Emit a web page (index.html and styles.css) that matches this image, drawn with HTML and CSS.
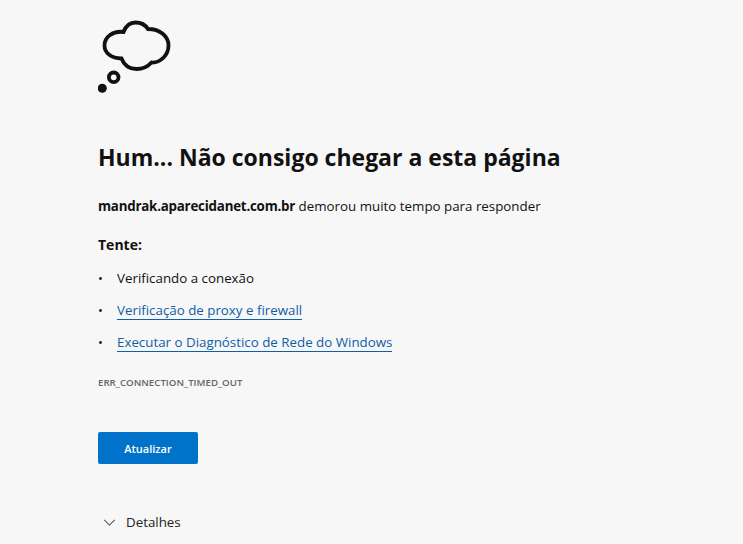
FILE: index.html
```html
<!DOCTYPE html>
<html lang="pt-BR">
<head>
<meta charset="utf-8">
<title>Não consigo chegar a esta página</title>
<link rel="stylesheet" href="styles.css">
</head>
<body>
<main class="page">
  <svg class="cloud" viewBox="98 16 80 80" width="80" height="80" aria-hidden="true">
    <path class="cloud-line" d="M123.500 32C126 25.500 131 22.500 135.500 22.500C141 22.500 145.500 25 148 29C160 29 168.500 36 168.500 45.500C168.500 55 160.500 63 151.500 62.500C147 67.500 141.500 69 136.500 69C129.500 69 124 65 121.500 58.500C111.500 58.500 104.500 53 104.500 45.500C104.500 37 113 30.500 123.500 32Z"/>
    <circle class="cloud-line ring" cx="113.700" cy="77.300" r="4.800"/>
    <circle class="dot" cx="102.300" cy="88.300" r="4.500"/>
  </svg>
  <h1 class="title">Hum... Não consigo chegar a esta página</h1>
  <p class="lead"><strong>mandrak.aparecidanet.com.br</strong> demorou muito tempo para responder</p>
  <h2 class="try">Tente:</h2>
  <ul class="tips">
    <li>Verificando a conexão</li>
    <li><a href="#">Verificação de proxy e firewall</a></li>
    <li><a href="#">Executar o Diagnóstico de Rede do Windows</a></li>
  </ul>
  <p class="code">ERR_CONNECTION_TIMED_OUT</p>
  <button class="reload" type="button">Atualizar</button>
  <div class="details">
    <svg class="chevron" viewBox="0 0 14 8" width="13" height="7" aria-hidden="true"><path d="M1 1l6 6 6-6"/></svg>
    <span>Detalhes</span>
  </div>
</main>
</body>
</html>
```
FILE: styles.css
```css
html, body {
  margin: 0;
  height: 100%;
  overflow: hidden;
  background: #f7f7f7;
}
body {
  color: #111;
  font-family: "Open Sans", "Noto Sans", sans-serif;
  font-size: 13.330px;
}
.page {
  display: flex;
  flex-direction: column;
  align-items: flex-start;
  padding: 16px 0 0 98px;
}
.cloud { display: block; }
.cloud-line { fill: none; stroke: #111; stroke-width: 3.800; }
.ring { stroke-width: 3.800; }
.dot { fill: #111; }
.title {
  margin: 46px 0 0;
  font-size: 23px;
  line-height: 30px;
  font-weight: 700;
}
.lead {
  margin: 24px 0 0;
  line-height: 20px;
}
.lead strong { font-weight: 700; letter-spacing: -0.220px; }
.try {
  margin: 19px 0 0;
  font-size: 14px;
  line-height: 20px;
  font-weight: 700;
}
.tips {
  list-style: none;
  margin: 13px 0 0;
  padding: 0;
  display: flex;
  flex-direction: column;
  gap: 12px;
}
.tips li {
  display: flex;
  line-height: 20px;
}
.tips li::before {
  content: "•";
  width: 19px;
  flex: none;
  font-size: 13px;
}
.tips a {
  color: #0f5ea8;
  text-decoration: none;
  border-bottom: 1px solid #0f5ea8;
  box-sizing: border-box;
  height: 20px;
}
.code {
  margin: 24px 0 0;
  font-size: 9.700px;
  line-height: 14px;
  font-weight: 600;
  color: #666;
}
.reload {
  margin-top: 42px;
  width: 100px;
  height: 32px;
  border: 0;
  border-radius: 2px;
  background: #0072c9;
  color: #fff;
  font: 600 11px "Open Sans", sans-serif;
}
.details {
  display: flex;
  align-items: center;
  gap: 10px;
  margin: 48px 0 0 5px;
  line-height: 20px;
  color: #222;
}
.chevron { fill: none; stroke: #555; stroke-width: 1.200; }
```
